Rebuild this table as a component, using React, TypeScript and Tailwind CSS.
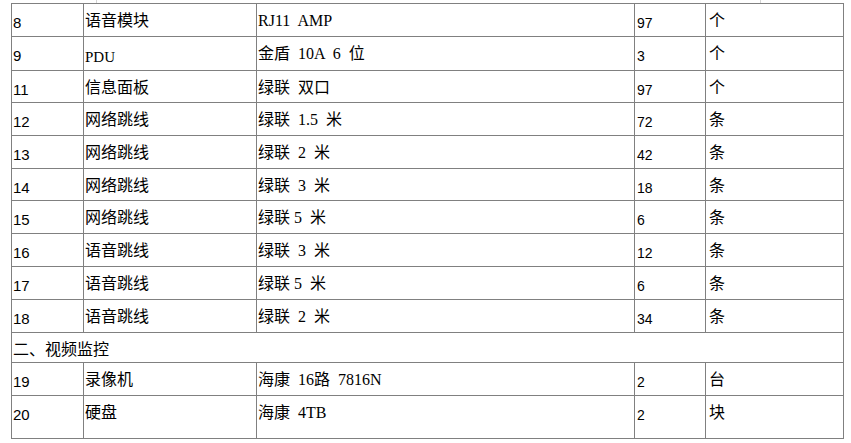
type Row = {
  no: string
  name: string
  spec: string
  qty: string
  unit: string
}

const rowsA: Row[] = [
  { no: '8', name: '语音模块', spec: 'RJ11  AMP', qty: '97', unit: '个' },
  { no: '9', name: 'PDU', spec: '金盾  10A  6  位', qty: '3', unit: '个' },
  { no: '11', name: '信息面板', spec: '绿联  双口', qty: '97', unit: '个' },
  { no: '12', name: '网络跳线', spec: '绿联  1.5  米', qty: '72', unit: '条' },
  { no: '13', name: '网络跳线', spec: '绿联  2  米', qty: '42', unit: '条' },
  { no: '14', name: '网络跳线', spec: '绿联  3  米', qty: '18', unit: '条' },
  { no: '15', name: '网络跳线', spec: '绿联 5  米', qty: '6', unit: '条' },
  { no: '16', name: '语音跳线', spec: '绿联  3  米', qty: '12', unit: '条' },
  { no: '17', name: '语音跳线', spec: '绿联 5  米', qty: '6', unit: '条' },
  { no: '18', name: '语音跳线', spec: '绿联  2  米', qty: '34', unit: '条' },
]

const rowsB: Row[] = [
  { no: '19', name: '录像机', spec: '海康  16路  7816N', qty: '2', unit: '台' },
  { no: '20', name: '硬盘', spec: '海康  4TB', qty: '2', unit: '块' },
]

const cell = 'border-r border-b border-[#808080] pl-[1px] leading-[20px] whitespace-pre overflow-hidden'
const cjk = "font-['Noto_Sans_CJK_SC',sans-serif] text-[16px] pt-[5px]"

function Cells({ r }: { r: Row }) {
  const latinName = r.name === 'PDU'
  return (
    <>
      <div className={`${cell} font-['Liberation_Sans',sans-serif] text-[15px] pt-[9px]`}>{r.no}</div>
      <div
        className={
          latinName
            ? `${cell} font-['Liberation_Serif',serif] text-[15px] pt-[10px]`
            : `${cell} ${cjk}`
        }
      >
        {r.name}
      </div>
      <div className={`${cell} font-['Liberation_Serif','Noto_Sans_CJK_SC',serif] text-[16px] pt-[7px]`}>
        {r.spec}
      </div>
      <div className={`${cell} font-['Liberation_Sans',sans-serif] text-[14px] pt-[9px] pl-[2px]`}>{r.qty}</div>
      <div className={`${cell} ${cjk} pl-[3px]`}>{r.unit}</div>
    </>
  )
}

export default function App() {
  return (
    <div className="w-[851px] h-[443px] bg-white text-black overflow-hidden">
      <div className="flex h-[3px]">
        <div className="ml-[96px] w-px bg-[#d4d4d4]" />
        <div className="ml-[663px] w-px bg-[#d4d4d4]" />
      </div>
      <div className="ml-[11px] w-[833px] grid grid-cols-[72px_173px_378px_71px_138px] grid-rows-[33px_34px_32px_33px_33px_32px_33px_33px_33px_33px_30px_33px_43px] border-l border-t border-[#808080]">
        {rowsA.map((r) => (
          <Cells key={r.no} r={r} />
        ))}
        <div className={`${cell} ${cjk} col-span-5`}>二、视频监控</div>
        {rowsB.map((r) => (
          <Cells key={r.no} r={r} />
        ))}
      </div>
    </div>
  )
}
